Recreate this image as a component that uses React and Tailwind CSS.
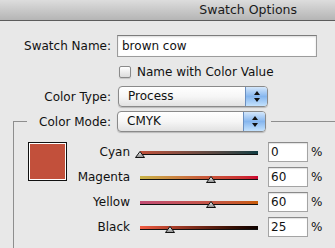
import React from "react";

function Thumb({ pct }) {
  return (
    <svg
      className="absolute top-0"
      style={{ left: `${pct * 1.18 - 5}px` }}
      width="10"
      height="7"
      viewBox="0 0 10 7"
    >
      <defs>
        <linearGradient id="tg" x1="0" y1="0" x2="0" y2="1">
          <stop offset="0" stopColor="#f4f4f4" />
          <stop offset="1" stopColor="#8a8a8a" />
        </linearGradient>
      </defs>
      <polygon points="5,0.5 9.5,6.5 0.5,6.5" fill="url(#tg)" stroke="#111" strokeWidth="1" strokeLinejoin="round" />
    </svg>
  );
}

function Slider({ label, pct, value, grad }) {
  return (
    <div className="flex h-[20px] items-start">
      <div className="w-[63px] text-right leading-[20px]">{label}</div>
      <div className="relative ml-[10px] mt-[9px] h-[7px] w-[118px]">
        <div className={`h-[4px] w-full border-b border-[#111] ${grad}`} />
        <Thumb pct={pct} />
      </div>
      <div className="ml-[10px] h-[20px] w-[40px] border border-[#a4a4a4] border-t-[#8a8a8a] bg-white pl-[2px] leading-[18px] shadow-[inset_0_1px_1px_rgba(0,0,0,0.12)]">
        {value}
      </div>
      <div className="ml-[3px] leading-[20px]">%</div>
    </div>
  );
}

function Select({ text, w }) {
  return (
    <div
      className={`flex h-[21px] ${w} overflow-hidden rounded-[4px] border border-[#8a8a8a] bg-gradient-to-b from-[#ffffff] via-[#f6f6f6] to-[#e2e2e2] shadow-[0_1px_1px_rgba(0,0,0,0.2)]`}
    >
      <div className="flex-1 pl-[9px] leading-[19px]">{text}</div>
      <div className="flex w-[22px] flex-col items-center justify-center gap-[3px] border-l border-[#6a8fc0] bg-gradient-to-b from-[#d4e7fb] via-[#86b6ee] to-[#c4e2fd]">
        <svg width="6" height="4" viewBox="0 0 6 4">
          <polygon points="3,0 6,4 0,4" fill="#111" />
        </svg>
        <svg width="6" height="4" viewBox="0 0 6 4">
          <polygon points="0,0 6,0 3,4" fill="#111" />
        </svg>
      </div>
    </div>
  );
}

export default function App() {
  return (
    <div className="h-[248px] w-[335px] overflow-hidden bg-[#e8e8e8] font-['DejaVu_Sans',sans-serif] text-[12px] text-[#111]">
      <div className="flex h-[21px] items-center justify-end border-b border-[#5c5c5c] bg-gradient-to-b from-[#dddddd] to-[#b5b5b5] pr-[38px] text-[12.5px] text-[#1a1a1a]">
        Swatch Options
      </div>
      <div className="pt-[14px]">
        <div className="flex items-center">
          <div className="w-[111px] text-right">Swatch Name:</div>
          <div className="ml-[6px] h-[22px] w-[200px] border border-[#9c9c9c] border-t-[#7c7c7c] bg-white pl-[4px] leading-[20px] shadow-[inset_0_1px_2px_rgba(0,0,0,0.15)]">
            brown cow
          </div>
        </div>
        <div className="mt-[9px] flex h-[12px] items-center">
          <div className="ml-[119px] h-[12px] w-[12px] rounded-[2px] border border-[#8a8a8a] bg-gradient-to-b from-white to-[#dcdcdc] shadow-[0_1px_1px_rgba(0,0,0,0.15)]" />
          <div className="ml-[6px] leading-[12px]">Name with Color Value</div>
        </div>
        <div className="mt-[8px] flex items-center">
          <div className="w-[111px] text-right">Color Type:</div>
          <div className="ml-[7px]">
            <Select text="Process" w="w-[150px]" />
          </div>
        </div>
        <fieldset className="ml-[13px] mt-[4px] h-[160px] border-l border-t border-[#8e8e8e]">
          <legend className="ml-[13px] pr-[5px]">
            <div className="flex items-center">
              <div className="w-[84px] text-right">Color Mode:</div>
              <div className="ml-[6px]">
                <Select text="CMYK" w="w-[149px]" />
              </div>
            </div>
          </legend>
          <div className="flex pl-[14px] pt-[10px]">
            <div className="h-[39px] w-[39px] border border-[#111] bg-white p-[1px]">
              <div className="h-full w-full bg-[#c2503b]" />
            </div>
            <div className="flex flex-col gap-[5px]">
              <Slider label="Cyan" pct={0} value="0" grad="bg-gradient-to-r from-[#c0503a] to-[#0c3c42]" />
              <Slider label="Magenta" pct={60} value="60" grad="bg-gradient-to-r from-[#c8b448] via-[#c8603c] to-[#cc0030]" />
              <Slider label="Yellow" pct={60} value="60" grad="bg-gradient-to-r from-[#c24c74] to-[#c85a00]" />
              <Slider label="Black" pct={25} value="25" grad="bg-gradient-to-r from-[#f25c42] to-[#0e0200]" />
            </div>
          </div>
        </fieldset>
      </div>
    </div>
  );
}
